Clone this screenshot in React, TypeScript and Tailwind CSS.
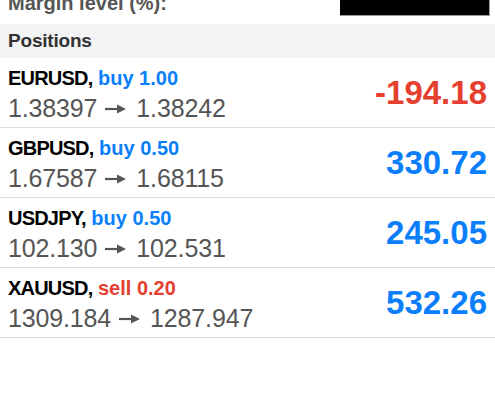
const positions = [
  { symbol: 'EURUSD', side: 'buy', volume: '1.00', open: '1.38397', current: '1.38242', profit: '-194.18' },
  { symbol: 'GBPUSD', side: 'buy', volume: '0.50', open: '1.67587', current: '1.68115', profit: '330.72' },
  { symbol: 'USDJPY', side: 'buy', volume: '0.50', open: '102.130', current: '102.531', profit: '245.05' },
  { symbol: 'XAUUSD', side: 'sell', volume: '0.20', open: '1309.184', current: '1287.947', profit: '532.26' },
];

const BLUE = 'text-[#0b7ffb]';
const RED = 'text-[#e5402f]';

function Arrow() {
  return (
    <svg width="22" height="12" viewBox="0 0 22 12" className="inline-block ml-[8px] mr-[9px] align-[2px]">
      <line x1="0" y1="6" x2="14" y2="6" stroke="#555555" strokeWidth="2.2" />
      <polygon points="12,1.5 21,6 12,10.5" fill="#555555" />
    </svg>
  );
}

function PositionRow({ p }: { p: (typeof positions)[number] }) {
  const sideColor = p.side === 'buy' ? BLUE : RED;
  const profitColor = p.profit.startsWith('-') ? RED : BLUE;
  return (
    <div className="flex items-center justify-between h-[70px] border-b border-[#dcdcdc] pl-2 pr-2">
      <div className="flex flex-col self-start pt-[9px]">
        <div className="text-[20px] leading-[22px] font-bold">
          <span className="text-black tracking-[-0.8px]">{p.symbol},</span>{' '}
          <span className={sideColor}>
            {p.side} {p.volume}
          </span>
        </div>
        <div className="mt-[5px] text-[25px] leading-[28px] text-[#555555] whitespace-nowrap tracking-[-0.15px]">
          {p.open}
          <Arrow />
          {p.current}
        </div>
      </div>
      <div className={`text-[33px] leading-none font-bold ${profitColor}`}>{p.profit}</div>
    </div>
  );
}

export default function App() {
  return (
    <div className="w-[495px] h-[400px] bg-white overflow-hidden font-['Liberation_Sans',Arial,sans-serif]">
      <div className="flex items-start justify-between h-[24px] overflow-hidden pl-2 pr-[5px]">
        <span className="-mt-[9px] text-[20px] leading-[24px] font-bold text-[#555555]">Margin level (%):</span>
        <div className="w-[150px] h-[16px] bg-black border-r border-b border-[#9a9a9a]" />
      </div>

      <div className="h-[34px] flex items-center bg-[#f4f4f4] px-2">
        <span className="text-[19px] font-bold text-[#333333] tracking-[-0.2px]">Positions</span>
      </div>

      {positions.map((p) => (
        <PositionRow key={p.symbol} p={p} />
      ))}
    </div>
  );
}
